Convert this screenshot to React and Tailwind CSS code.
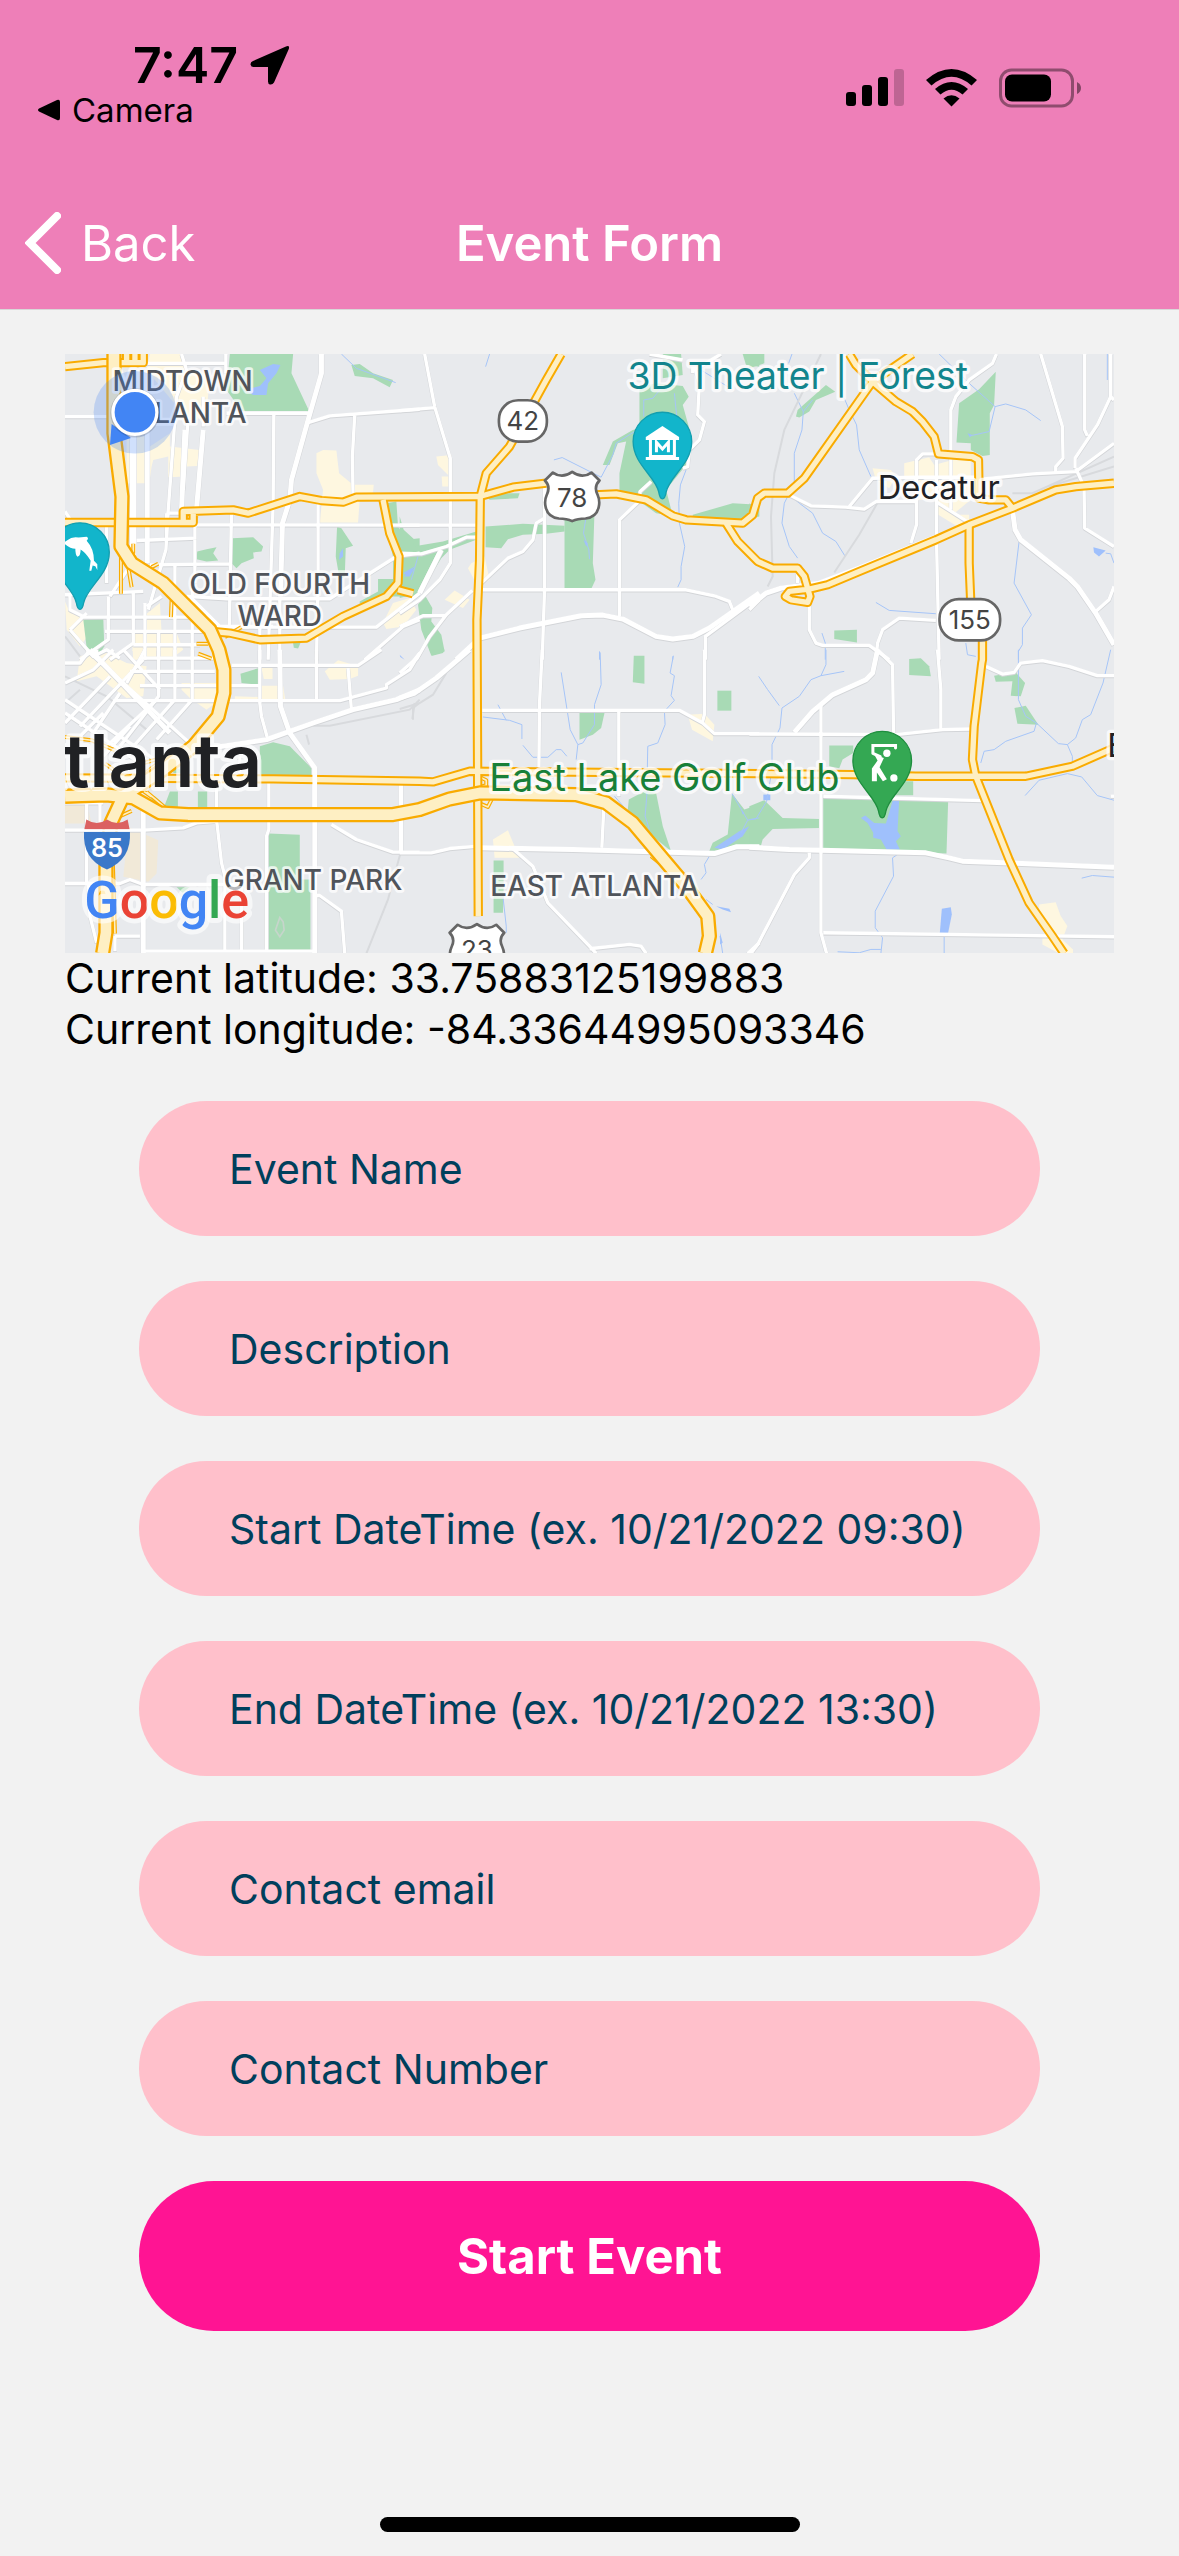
import React from "react";

/* ---------- Map data: six tiles, each with its own origin ---------- */

const ORIGIN = {
  nw: "translate(-15 -12)",
  n: "translate(1005 -12)",
  ne: "translate(2055 -12)",
  sw: "translate(-15 888)",
  s: "translate(1005 888)",
  se: "translate(2055 888)",
};

const TOWN = {
  nw: [
    "M770 310L790 300L830 302L838 370L880 405L942 405L940 428L900 450L895 518L780 518L790 420L770 370Z",
    "M200 260H270V290L330 250V290L418 300L412 348L380 350L375 380L325 382V320L280 330L275 350L268 400H200Z",
    "M270 12H360L380 60L450 70L440 200L400 210L360 180L260 60Z",
    "M1000 760L1050 745L1070 780L1030 830L980 838L970 820Z",
    "M215 850H250V800L300 760L305 850L350 850L370 900L330 930H220Z",
    "M15 755L30 790L70 800L90 850L60 890L20 840Z",
  ],
  n: ["M110 320L155 315V410H128L126 380H150L115 345Z", "M215 640L255 620L270 690L235 710L205 655Z", "M165 722L210 750L190 775L135 750Z"],
  ne: [
    "M465 340L540 322L555 345L610 330H665V385H735V420H665V450L610 495H660V530H625L560 490V450H500V385H465Z",
    "M370 355L425 360L440 380L420 415L380 390Z",
  ],
  sw: [
    "M60 20L120 0L200 40L260 50L250 140L200 145L110 80L50 95Z",
    "M215 0H290V25H240Z",
    "M365 100H470L480 150L440 180L390 145L365 120Z",
    "M605 55H638V88H612Z",
    "M600 108H670L678 160H525V140L600 142Z",
    "M795 65L835 32L895 50V78L870 88L810 90Z",
  ],
  s: ["M280 570L325 542L345 590L375 625H285Z", "M865 195L915 192L945 225L940 275L878 240Z"],
  se: ["M870 765L920 758L935 800L955 830L940 870L972 900V912H930L880 885V860L905 850L870 800Z"],
};

const PARKS = {
  nw: [
    "M510 12H700L695 70L748 183H545L500 120Z",
    "M875 45L900 42L940 70L1000 90L990 112L940 85L885 78Z",
    "M518 565L580 562L610 590L605 605L580 608L582 625L545 640L530 655L515 640Z",
    "M412 605L440 598L470 592L460 610L475 632L440 635L410 628Z",
    "M832 530L845 535L880 588L858 595L855 680L840 690L828 620Z",
    "M980 460L1010 455L1015 530L1040 570L1080 565V740L1000 740L900 762V755L955 725V688H1000V620L985 560Z",
    "M70 810L130 808L133 890L105 930L80 895Z",
    "M700 880L722 880L715 896L702 894Z",
  ],
  n: [
    "M0 500L12 540L45 570L40 590L130 575L230 545V570L150 600L125 625L80 700L60 730L0 745Z",
    "M258 530L370 522L495 528V545L440 552L370 555L325 568L305 595L258 592Z",
    "M495 490L585 485L580 640L588 690L575 718H495Z",
    "M255 430H360L355 445L270 450Z",
    "M610 345L640 275L700 240L720 235V110L770 100L850 108L868 140L850 165L868 230L860 345L800 420L820 498L770 490L700 440L660 420V370L680 275L655 280L630 345Z",
    "M55 765L75 735L98 775L95 815L125 855L135 905L95 918L65 840Z",
    "M880 495L1000 460L1080 465V500L1030 510L880 500Z",
    "M1030 12H1080V50L1040 45Z",
    "M790 12H845L850 75L790 85Z",
    "M855 310L870 320V345L850 350Z",
  ],
  ne: [
    "M0 12H45V40L0 55Z",
    "M145 180L190 140L230 105L258 125L200 150L180 185L150 203L140 200Z",
    "M630 160L690 118L740 65L735 165L722 190V315L700 318L665 300V280L622 278Z",
    "M255 842L323 840V878L255 868Z",
    "M0 460L15 470L0 490Z",
  ],
  sw: [
    "M85 0H130L105 28Z",
    "M542 72L598 55V105L545 100Z",
    "M600 290L640 278L690 290L755 355V378H600Z",
    "M330 426H354V478H310ZM414 426H442V478H414ZM260 435L285 440L325 475H300Z",
    "M627 552L720 556V690H752V905H627Z",
    "M345 708H395L368 730Z",
    "M340 350L380 370H340Z",
  ],
  s: [
    "M90 0H135L130 10L98 18Z",
    "M703 18H735V102L700 98Z",
    "M954 123H996V183H954Z",
    "M540 190H615L605 235L580 255L540 270Z",
    "M282 633H312V740L310 790H282Z",
    "M688 450L735 425L770 430L790 530L815 605L760 560L705 510L685 480Z",
    "M998 432L1035 480L1080 465V600L930 604L940 580L985 555Z",
  ],
  se: [
    "M480 28L515 26L540 50L545 80L480 76Z",
    "M735 78L800 68L828 100L815 140L785 138L790 95L740 96Z",
    "M796 175L830 168L868 225L805 222Z",
    "M240 288H312V310L280 330L270 356L240 350Z",
    "M0 470L45 452L100 505L210 508V535L70 538L40 570L35 588L0 590Z",
    "M222 443L597 455L592 612L222 598Z",
    "M440 395H492V437H440Z",
  ],
};

const WATER = {
  nw: ["M600 60L640 42L662 45L650 70L625 100L620 135L580 135L555 120L600 108L620 85Z", "M840 610L850 595L850 620L838 630Z", "M1030 670L1065 650L1045 680Z"],
  n: ["M12 680L45 655L30 680Z", "M552 570L565 580L560 590Z"],
  ne: ["M1033 592L1070 602L1050 620L1035 608ZM655 250L670 255L662 262Z"],
  sw: ["M1020 15L1035 30L1022 22Z"],
  s: ["M945 595L1020 545L1050 530L1030 560L970 600Z", "M950 770L990 778L995 788L970 780ZM962 850L970 880L962 885Z", "M1025 480L1035 490L1030 495Z"],
  se: [
    "M335 505L348 498L375 520L410 522L430 455L450 450L445 545L455 560L440 575L452 600H412L395 570L372 565V550L355 520Z",
    "M578 778L605 773L608 795L597 850H572Z",
    "M42 435H63V452H42Z",
  ],
};

const STREAMS = {
  nw: ["M845 12L890 55L1008 98", "M1075 620L1055 690"],
  n: [
    "M270 12L258 50",
    "M463 330L488 323L605 382L640 315L650 280L705 245",
    "M733 200V150L760 145L790 110",
    "M825 130L832 200M860 360L843 405L838 460L840 520L856 590L845 650V690L835 712",
    "M560 500L552 550L568 600L570 628",
    "M905 60L985 110M600 905V930M820 920V930",
  ],
  ne: [
    "M128 12L118 40M135 130L162 185L158 240L135 310V400L105 460L98 520L120 590L145 625",
    "M285 145L300 180L322 225L330 300L365 380M162 185L190 150",
    "M120 435L150 460L190 490L220 550L260 575L288 620",
    "M570 12L660 100L738 170L720 245L662 258M738 170L770 162L830 180L875 212",
    "M380 758L420 782L560 792M810 575L795 700L847 795L820 835V885L808 905V930M1075 12V90M1070 610L1085 612L1095 640",
    "M218 850L228 880V930M650 880L655 915L680 920",
  ],
  s: [
    "M485 68L512 240L535 285L530 330M602 8L605 105L585 165V225L550 280L535 285",
    "M822 18L812 70L825 78L815 138L825 152L795 185L797 225L775 280L745 290L742 440L737 500L750 540",
    "M250 202L330 212L367 225V268M295 165L320 212M370 287L400 323H445L470 300H485L502 320",
    "M930 620L915 645L920 670L905 690M310 740L320 830V850M645 440L680 480",
    "M998 432L1045 512L1025 550M1045 512L1080 505M920 750L940 765M962 860L970 912",
  ],
  se: [
    "M230 0V45L215 78L285 65M215 78L185 90L150 140L98 175L92 235L68 285V360L52 455L20 508L0 510",
    "M28 80L55 120L90 168",
    "M808 0V150L830 200L862 220L928 282L955 285L980 265L1000 210L1025 195L1062 100L1085 0",
    "M862 220L855 245L770 275L735 300L705 305L695 340M955 285L970 320V335M828 438L870 392L955 372L998 382L1045 438L1095 452",
    "M452 610L430 625L433 680L378 785V835L400 865L395 912M585 850V912M265 907L330 910L365 900H395M998 686L1030 678L1095 683",
  ],
};

const RAILS = {
  nw: ["M15 860L60 920"],
  ne: ["M215 12L105 240L75 370L65 500L70 680L55 710", "M390 450L330 555L255 668M790 430H850L1095 320M900 410L1095 350"],
  sw: [
    "M1080 150L1050 180L810 228H760M740 255L748 285M1065 160L1058 208",
    "M15 80L140 140L260 240M60 120L15 160",
    "M1022 612L985 750L920 912",
  ],
  s: ["M0 178L60 160L100 135L140 70M60 160L40 175V210"],
};

const STREETS = {
  nw: [
    "M15 200H150M180 40H500M498 12V70M500 190H745M215 60V600M262 60V640M365 12L380 60L350 140L325 480L318 600L265 780M385 200L370 420M430 140V230",
    "M642 195L640 460L625 930M745 218L810 198L1080 178M885 195L878 320L880 440M775 460V700L770 930M320 490H365M320 490V570",
    "M360 525L1080 526M515 485L508 840M405 525V700M230 572L410 565M270 645L508 642M380 740L500 747L810 747L1010 620L1080 610M1080 730L950 832H470M15 735L250 725M30 735V780L70 800",
    "M140 530V700M70 802H450M135 845H480M220 885H420M345 640L345 930M397 700V930M255 760V930M296 850V930M600 830V930M660 740V930M1080 810L1030 830L915 930",
    "M30 840L80 790M30 840L100 920L140 900L180 925M15 485L35 515M390 740L480 830H640M150 740L215 640M145 740V870L60 930M220 730V880L150 930M305 740L260 770",
  ],
  n: [
    "M75 12L105 170L152 325V640L120 690L60 750L0 790M0 182L105 173M0 526H235M0 610L65 612L140 590L200 562H235M435 410V720L428 930",
    "M245 700L325 625L370 605L400 570L410 520L435 505M755 395L722 425L718 455L660 510V800M218 722L140 795L90 860L50 930M140 797L70 798L0 830",
    "M245 720H860L945 738L990 755L1002 785M1080 740L918 860V930M885 50L900 100L895 195L915 215L900 270L870 300L865 350L850 355M750 12L850 30M885 60L965 12",
    "M60 725L120 605M880 50V70",
  ],
  ne: [
    "M742 12L730 40L660 90L620 140L605 180V480M875 12L940 230L942 325L920 350V368M1007 12V240L1015 258M1085 12V140L1045 225L978 325V355",
    "M705 387L850 372L980 365L1095 280M980 355L1005 410L1007 535L1095 590M1085 140L1095 150M120 435L185 468L290 472L345 478L380 455H500M300 470L370 385L500 382H700",
    "M562 312H520L502 330V525L485 580M562 330V570L570 930M500 385V420M560 455L662 520M145 670V700M180 760V840L200 880L220 887H360L420 930M380 930L385 880L400 840L450 805L560 812",
    "M1040 785L1080 750L1095 710M0 780L30 750",
  ],
  sw: [
    "M515 47H895L965 0M160 153H840L980 115V105L1050 60L1080 10M600 0V160L605 200L622 262M770 0V150M865 55L875 180M190 0L300 120M245 25H460M210 65H465M240 108H600M296 0V140L180 290M345 0V150L220 290M397 0V150L290 270M255 0L200 100",
    "M15 100L100 60L160 0M15 40H60L90 0M15 150L300 340M15 190L240 340M110 0V20M80 0L400 290M60 230L250 30M100 250L180 130M140 290L290 150M15 220L150 80M130 190L60 260M210 230L130 320",
    "M15 542H250L370 535L410 520L470 515M470 410V510L485 640L495 680V905M627 400V540L620 560V905M540 320V370M1022 400V610M815 525L890 570L1000 608H1080M765 738L780 738L845 785L855 912",
    "M15 702H180L210 690L250 705H545V905M250 905H760M165 860H240M85 700L90 800L110 880M80 460V700M120 460V520M165 905V860M15 460H130",
  ],
  s: [
    "M60 10L40 35L0 70M428 0L420 160L418 360M248 182H840L910 220L945 252H1080M658 185V440M915 0V195L908 222M613 475L607 595M0 610H95L150 597L235 590",
    "M340 598L400 650L445 760L570 890L590 912M570 898L690 885L725 890L740 912M5 400V610M1045 912L1080 880",
  ],
  se: [
    "M0 253L440 255L580 240L665 238M565 0L575 120V240M385 0L430 45L433 250M215 160V850L232 912M222 440L700 453M180 610V625L135 675L25 885L5 912M710 50L760 73L795 68L815 40L880 33L960 50L1045 78H1095M222 850L1095 862",
    "M1095 440L1085 440",
  ],
};

const AVENUES = {
  nw: ["M785 12V70L745 210L695 390L690 450L668 520L662 740", "M222 60V640M262 240V640M375 240L365 480M430 240L408 500"],
  n: ["M170 930L240 865L360 835L545 798L610 796L670 808L770 860L820 868L880 860L930 835L1080 730", "M60 730L125 600"],
  ne: ["M0 770L50 730L95 715L210 700L330 655L560 562", "M790 480L798 540L815 570L960 685L985 710L1040 790L1095 885"],
  sw: ["M420 300L620 270L760 220L880 180L1010 150L1080 120", "M660 0L662 170L690 250L765 355V912", "M250 480V912", "M90 0L330 250"],
  s: ["M0 145L45 130L110 85L210 0", "M245 595L520 600L945 612L1010 592H1080"],
  se: ["M0 593L120 600L530 610L600 625L640 635L1095 653", "M385 0L370 70L350 90L250 135L190 185L135 248"],
};

const ARTERIALS = [
  "M0 38L115 26H235V0M185 28V0M210 28V0",
  "M0 506H385V475M355 506V473L505 468L550 478L705 428L770 440L835 445L875 430L1245 428L1345 400L1445 388",
  "M1590 423L1655 420L1745 438L1825 486L1865 498L2035 508L2065 483L2080 433L2100 418H2170L2220 373L2425 83L2545 0",
  "M2355 0L2375 33L2425 83L2495 143L2545 173L2575 203L2610 248L2623 300L2725 308L2743 318L2745 433L2775 438H2825L2845 463",
  "M3150 388L3035 398L2975 408L2845 463L2715 513L2615 558L2385 653L2290 693L2235 706L2175 713L2163 728L2180 738L2230 746L2237 728L2220 668L2200 643H2125L2080 623L2020 563L1985 508",
  "M2715 513V628L2720 748L2755 858V918L2753 928L2730 1118L2725 1218L2735 1268L2835 1518L2895 1648L2965 1748L3000 1800",
  "M1490 0L1445 78L1335 278L1265 358L1247 428L1245 618L1237 798L1241 1688",
  "M955 438L975 538L1003 608L1000 688L965 728L835 788L725 853L585 858L495 838L450 834",
  "M1000 708L1045 720",
  "M0 1273L625 1276L1065 1283L1105 1285L1215 1253L2085 1260L2365 1263L2555 1268H2885L3025 1238L3150 1183",
];

const RAMPS = [
  "M168 590V720M205 570V600M200 700L190 640M320 740L318 790M260 640L280 630M440 870L470 905M395 870H430M400 900L440 915M480 850L530 820",
  "M0 1150L80 1160L150 1190M120 1230L260 1330M160 1250L300 1210M200 1290L330 1190M245 1315L310 1370M160 1390L200 1372",
  "M1245 1270L1265 1280V1295L1245 1300M1235 1345L1270 1360L1285 1330M1760 1508L1800 1540M140 1400L150 1740",
];

const FREEWAYS = [
  "M147 0V238L171 428L168 578L200 628L295 688L435 828L462 888L477 948V1018L460 1088L385 1178L295 1248L175 1328L138 1408L123 1538V1738L113 1800",
  "M0 1328L125 1324L205 1333L285 1378L370 1383H985L1065 1368L1155 1336L1245 1318L1535 1323L1625 1348L1705 1408L1865 1598L1930 1688L1935 1748L1923 1800",
];

/* Draws one kind of feature on all tiles */
function Layer({ data, ...style }) {
  return (
    <g {...style}>
      {Object.entries(data).map(([tile, paths]) => (
        <g key={tile} transform={ORIGIN[tile]}>
          {paths.map((d) => (
            <path key={d} d={d} />
          ))}
        </g>
      ))}
    </g>
  );
}

function Roads({ paths, casing, width, inner }) {
  return (
    <g fill="none" strokeLinejoin="round">
      {paths.map((d) => (
        <path key={d} d={d} stroke={casing} strokeWidth={width} />
      ))}
      {paths.map((d) => (
        <path key={d} d={d} stroke="#feefc3" strokeWidth={inner} />
      ))}
    </g>
  );
}

function Label({ x, y, size = 84, fill = "#50545a", weight = 500, anchor = "middle", halo = 16, children }) {
  return (
    <text
      x={x}
      y={y}
      fontSize={size}
      fontWeight={weight}
      fill={fill}
      textAnchor={anchor}
      stroke="#ffffff"
      strokeOpacity="0.75"
      strokeWidth={halo}
      strokeLinejoin="round"
      paintOrder="stroke"
    >
      {children}
    </text>
  );
}

function Pin({ x, y, fill, edge, children }) {
  return (
    <g transform={`translate(${x} ${y})`}>
      <path
        d="M0 172C-6 172-9 165-11 152C-20 105-88 68-88 0A88 88 0 0 1 88 0C88 68 20 105 11 152C9 165 6 172 0 172Z"
        fill={fill}
        stroke={edge}
        strokeWidth="4"
      />
      {children}
    </g>
  );
}

function OvalShield({ x, y, w, children }) {
  return (
    <g>
      <rect x={x - w / 2} y={y - 62} width={w} height="124" rx="58" fill="#fff" stroke="#666" strokeWidth="8" />
      <text x={x} y={y + 28} fontSize="78" fill="#444" textAnchor="middle">
        {children}
      </text>
    </g>
  );
}

function UsShield({ x, y, children }) {
  return (
    <g transform={`translate(${x} ${y})`}>
      <path
        d="M-58 -72Q-30 -52 0 -74Q30 -52 58 -72L82 -48Q64 -30 76 -6Q84 12 80 30Q74 62 40 66Q16 66 0 74Q-16 66 -40 66Q-74 62 -80 30Q-84 12 -76 -6Q-64 -30 -82 -48Z"
        fill="#fff"
        stroke="#666"
        strokeWidth="8"
        strokeLinejoin="round"
      />
      <text y="32" fontSize="78" fill="#444" textAnchor="middle">
        {children}
      </text>
    </g>
  );
}

function EventMap() {
  return (
    <svg
      viewBox="0 0 3150 1800"
      className="block w-full"
      role="img"
      aria-label="Map of Atlanta"
      fontFamily="Inter, 'Liberation Sans', sans-serif"
    >
      <rect width="3150" height="1800" fill="#e8eaed" />
      <Layer data={TOWN} fill="#fef7e0" />
      <path d="M0 1348H65L80 1410H0ZM190 1420L280 1460L275 1560L250 1585L175 1570Z" fill="#f1e9d8" />
      <Layer data={PARKS} fill="#a8dab5" />
      <path d="M645 1692L655 1705L658 1730L645 1750L632 1730Z" fill="none" stroke="#c6d5cb" strokeWidth="5" />
      <Layer data={WATER} fill="#9fc0fc" />
      <Layer data={STREAMS} fill="none" stroke="#a6c5f8" strokeWidth="3" />
      <Layer data={RAILS} fill="none" stroke="#d8dadd" strokeWidth="6" />
      <g transform="translate(0 2)">
        <Layer data={STREETS} fill="none" stroke="#d3d5d8" strokeWidth="12" strokeLinejoin="round" />
        <Layer data={AVENUES} fill="none" stroke="#d3d5d8" strokeWidth="17" strokeLinejoin="round" />
      </g>
      <Layer data={STREETS} fill="none" stroke="#fff" strokeWidth="10" strokeLinejoin="round" />
      <Layer data={AVENUES} fill="none" stroke="#fff" strokeWidth="15" strokeLinejoin="round" />
      <Roads paths={RAMPS} casing="#f9ab00" width={12} inner={5} />
      <Roads paths={ARTERIALS} casing="#f9ab00" width={28} inner={16} />
      <Roads paths={FREEWAYS} casing="#f9ab00" width={46} inner={32} />
      <path d="M750 1240V1360" stroke="#fff" strokeWidth="14" />

      <Label x={353} y={111}>MIDTOWN</Label>
      <Label x={353} y={208}>ATLANTA</Label>
      <Label x={645} y={720}>OLD FOURTH</Label>
      <Label x={645} y={816}>WARD</Label>
      <Label x={745} y={1610}>GRANT PARK</Label>
      <Label x={1590} y={1628}>EAST ATLANTA</Label>
      <Label x={2200} y={106} size={112} fill="#12858d" weight={400} halo={20}>3D Theater | Forest</Label>
      <Label x={2624} y={436} size={98} fill="#202124" weight={400} halo={20}>Decatur</Label>
      <Label x={3130} y={1211} size={98} fill="#202124" weight={400} halo={20} anchor="start">E</Label>
      <Label x={1800} y={1313} size={114} fill="#188038" weight={400} halo={20}>East Lake Golf Club</Label>
      <Label x={592} y={1300} size={218} fill="#202124" weight={600} halo={24} anchor="end">Atlanta</Label>

      <OvalShield x={1375} y={201} w={144}>42</OvalShield>
      <OvalShield x={2717} y={798} w={182}>155</OvalShield>
      <UsShield x={1523} y={428}>78</UsShield>
      <UsShield x={1237} y={1786}>23</UsShield>

      <g transform="translate(126 1473)">
        <path d="M-62 -75Q-30 -54 0 -75Q30 -54 62 -75L68 -45H-68Z" fill="#db6161" />
        <path d="M-69 -38H69Q74 45 0 75Q-74 45 -69 -38Z" fill="#3a78c9" />
        <path d="M-69 -42H69" stroke="#fff" strokeWidth="8" />
        <text y="38" fontSize="76" fontWeight="600" fill="#fff" textAnchor="middle">
          85
        </text>
      </g>

      <Pin x={1794} y={263} fill="#12b5cb" edge="#129eaf">
        <path d="M0 -47L50 -14V-5H-50V-14Z" fill="#fff" />
        <path d="M-36 -8V45H36V-8M-50 51H50" stroke="#fff" strokeWidth="9" fill="none" />
        <path d="M-18 32V2L0 22L18 2V32" stroke="#fff" strokeWidth="9" fill="none" />
      </Pin>
      <Pin x={2454} y={1221} fill="#34a853" edge="#1e8e3e">
        <path d="M-28 -22V-45H40V-38M-28 -22L-6 -12" fill="none" stroke="#fff" strokeWidth="9" strokeLinecap="round" />
        <circle cx="14" cy="-22" r="11" fill="#fff" />
        <path d="M-24 -18L5 -8L-8 20L14 56L2 62L-16 36V62H-31V24L-14 0Z" fill="#fff" />
        <circle cx="35" cy="52" r="11" fill="#fff" />
      </Pin>
      <Pin x={45} y={595} fill="#12b5cb" edge="#129eaf">
        <path
          d="M-50 -28L-38 -36Q-24 -48 -4 -44L20 -46Q28 -42 20 -34Q42 -10 42 26L52 36V54L46 42L38 40L34 56H28L32 26Q20 4 2 -8Q2 12 -8 14Q-14 8 -14 -10Q-30 -10 -50 -28Z"
          fill="#fff"
        />
      </Pin>

      <circle cx="210" cy="175" r="124" fill="#4285f4" fillOpacity="0.25" />
      <path d="M135 273L140 210L198 252Z" fill="#4285f4" />
      <circle cx="210" cy="177" r="74" fill="#000" fillOpacity="0.15" />
      <circle cx="210" cy="175" r="66" fill="#4285f4" stroke="#fff" strokeWidth="10" />

      <text
        x="58"
        y="1694"
        fontFamily="Roboto, 'Liberation Sans', sans-serif"
        fontSize="156"
        fontWeight="500"
        stroke="#fff"
        strokeOpacity="0.6"
        strokeWidth="30"
        strokeLinejoin="round"
        paintOrder="stroke"
      >
        <tspan fill="#4285f4">G</tspan>
        <tspan fill="#ea4335">o</tspan>
        <tspan fill="#fbbc04">o</tspan>
        <tspan fill="#4285f4">g</tspan>
        <tspan fill="#34a853">l</tspan>
        <tspan fill="#ea4335">e</tspan>
      </text>
    </svg>
  );
}

/* ---------- Header ---------- */

function StatusBar() {
  return (
    <div className="flex h-[177px] items-start justify-between pr-[98px] pt-10 text-black">
      <div>
        <div className="flex h-[50px] items-center gap-3 pl-[133px]">
          <span className="text-[50px] font-semibold leading-none">7:47</span>
          <svg viewBox="0 0 40 40" className="size-10" aria-hidden="true">
            <path
              d="M36 1.500Q40 0 38.800 4L24 37.500Q22.500 40 20 39.500Q18 39 18 36.500V22H3.500Q1 22 .5 19.500Q.3 17 3 16Z"
              fill="currentColor"
            />
          </svg>
        </div>
        <button type="button" className="flex h-10 items-center gap-3 pl-[38px]">
          <svg viewBox="0 0 22 22" className="size-[22px]" aria-hidden="true">
            <path d="M1 9.500L19 1Q22 0 22 3V19Q22 22 19 21L1 12.500Q-1 11 1 9.500Z" fill="currentColor" />
          </svg>
          <span className="text-[33px] leading-none">Camera</span>
        </button>
      </div>
      <div className="flex items-center gap-[22px] pt-7">
        <svg viewBox="0 0 58 38" className="h-[38px] w-[58px]" aria-label="Signal">
          <rect y="23" width="10" height="14" rx="3" />
          <rect x="16" y="16" width="10" height="21" rx="3" />
          <rect x="32" y="8" width="10" height="29" rx="3" />
          <rect x="48" width="10" height="37" rx="3" opacity="0.2" />
        </svg>
        <svg viewBox="0 0 51 38" className="h-[38px] w-[51px]" aria-label="Wi-Fi">
          <path d="M0 11Q25.500 -11 51 11L45.500 16.500Q25.500 -1 5.500 16.500Z" />
          <path d="M9 20Q25.500 6 42 20L36.500 25.500Q25.500 16 14.500 25.500Z" />
          <path d="M17.500 29.500Q25.500 23 33.500 29.500L25.500 37.500Z" />
        </svg>
        <svg viewBox="0 0 82 40" className="h-10 w-[82px]" aria-label="Battery">
          <rect x="1.500" y="2" width="72" height="36" rx="11" fill="none" stroke="#000" strokeOpacity="0.4" strokeWidth="3" />
          <rect x="6" y="6.500" width="46" height="27" rx="7" />
          <path d="M78 14Q82 16 82 20T78 26Z" opacity="0.45" />
        </svg>
      </div>
    </div>
  );
}

function NavBar() {
  return (
    <nav className="grid h-[132px] grid-cols-[1fr_auto_1fr] items-center text-white">
      <button type="button" className="flex items-center gap-5 justify-self-start pl-[25px] text-[49px] leading-none">
        <svg viewBox="0 0 36 62" className="h-[62px] w-9" fill="none" aria-hidden="true">
          <path d="M32 4L5 31L32 58" stroke="currentColor" strokeWidth="8" strokeLinecap="round" strokeLinejoin="miter" />
        </svg>
        Back
      </button>
      <h1 className="text-[49px] font-semibold leading-none">Event Form</h1>
    </nav>
  );
}

/* ---------- Form ---------- */

const FIELDS = [
  { id: "name", type: "text", label: "Event Name" },
  { id: "description", type: "text", label: "Description" },
  { id: "start", type: "text", label: "Start DateTime (ex. 10/21/2022 09:30)" },
  { id: "end", type: "text", label: "End DateTime (ex. 10/21/2022 13:30)" },
  { id: "email", type: "email", label: "Contact email" },
  { id: "phone", type: "tel", label: "Contact Number" },
];

export default function App() {
  return (
    <div className="flex min-h-screen flex-col bg-[#f2f2f2] font-[Inter,'Liberation_Sans',sans-serif]">
      <header className="border-b border-[#d8d8d8] bg-[#ee7fb8]">
        <StatusBar />
        <NavBar />
      </header>

      <main className="flex-1 px-[65px] pt-11">
        <EventMap />
        <p className="text-[41px] leading-[51px] text-black">Current latitude: 33.75883125199883</p>
        <p className="text-[41px] leading-[51px] text-black">Current longitude: -84.33644995093346</p>

        <form className="mt-[46px] flex flex-col gap-[45px] px-[74px]" onSubmit={(e) => e.preventDefault()}>
          {FIELDS.map(({ id, type, label }) => (
            <input
              key={id}
              id={id}
              name={id}
              type={type}
              aria-label={label}
              placeholder={label}
              className="h-[135px] w-full rounded-full bg-[#ffc0cb] pl-[90px] pr-10 text-[41px] text-[#003f5c] outline-none placeholder:text-[#003f5c] placeholder:opacity-100"
            />
          ))}
          <button type="submit" className="h-[150px] w-full rounded-full bg-[#ff1493] text-[49px] font-bold leading-none text-white">
            Start Event
          </button>
        </form>
      </main>

      <footer className="flex justify-center pb-6">
        <div className="h-[15px] w-[420px] rounded-full bg-black" />
      </footer>
    </div>
  );
}
